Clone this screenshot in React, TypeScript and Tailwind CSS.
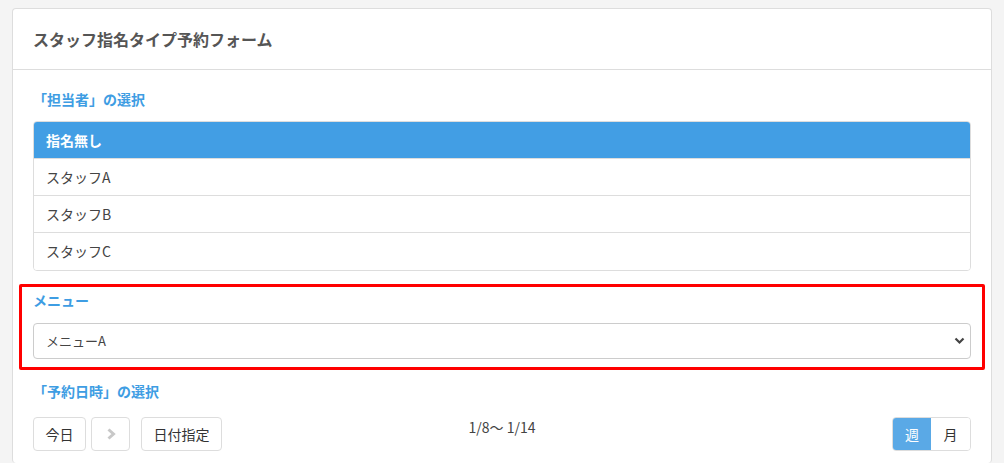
import { useState } from 'react';

const staff = ['指名無し', 'スタッフA', 'スタッフB', 'スタッフC'];

const font = { fontFamily: '"Noto Sans CJK JP", "Noto Sans", sans-serif' };

export default function App() {
  const [selected, setSelected] = useState(0);
  const [mode, setMode] = useState<'week' | 'month'>('week');

  return (
    <div className="min-h-[463px] bg-[#f4f4f4] pt-2 pl-3" style={font}>
      <div className="w-[980px] rounded bg-white border border-[#dddddd] border-b-0">
        <div className="h-[61px] border-b border-[#dddddd] px-5 flex items-center">
          <h1 className="text-[16px] font-bold text-[#555555]">スタッフ指名タイプ予約フォーム</h1>
        </div>

        <div className="px-5 pt-[19px] pb-3">
          <h2 className="text-[14px] leading-5 font-bold text-[#3e9de3]">「担当者」の選択</h2>

          <div className="mt-3 border border-[#dddddd] rounded overflow-hidden">
            {staff.map((name, i) => (
              <button
                key={name}
                onClick={() => setSelected(i)}
                className={`w-full h-[37px] flex items-center px-3 text-left text-[14px] ${
                  i < staff.length - 1 ? 'border-b border-[#dddddd]' : 'h-[36px]'
                } ${selected === i ? 'bg-[#429ee4] text-white font-bold' : 'bg-white text-[#444444]'}`}
              >
                {name}
              </button>
            ))}
          </div>

          <div className="mt-[13px] -mx-[14px] border-[3px] border-[#ff0000] rounded-[2px] px-[11px] pt-[3px] pb-2">
            <h2 className="text-[14px] leading-5 font-bold text-[#3e9de3]">メニュー</h2>
            <div className="relative mt-[13px]">
              <select className="w-full h-9 appearance-none rounded border border-[#cccccc] bg-white px-3 text-[13px] text-[#444444] outline-none">
                <option>メニューA</option>
                <option>メニューB</option>
              </select>
              <svg
                className="absolute right-[6px] top-[13px] pointer-events-none"
                width="11"
                height="9"
                viewBox="0 0 11 9"
              >
                <path d="M1.5 2.5 L5.5 6.5 L9.5 2.5" fill="none" stroke="#444444" strokeWidth="2.2" />
              </svg>
            </div>
          </div>

          <h2 className="mt-[11px] text-[14px] leading-5 font-bold text-[#3e9de3]">「予約日時」の選択</h2>

          <div className="mt-4 grid grid-cols-[1fr_auto_1fr] items-start">
            <div className="flex">
              <button className="h-[34px] w-[53px] rounded border border-[#dddddd] bg-white text-[14px] text-[#333333]">今日</button>
              <button className="ml-[5px] h-[34px] w-[39px] rounded border border-[#dddddd] bg-white flex items-center justify-center">
                <svg width="10" height="12" viewBox="0 0 10 12">
                  <path d="M2.5 1.5 L7.5 6 L2.5 10.5" fill="none" stroke="#c8c8c8" strokeWidth="3" />
                </svg>
              </button>
              <button className="ml-[11px] h-[34px] w-[81px] rounded border border-[#dddddd] bg-white text-[14px] text-[#333333]">日付指定</button>
            </div>
            <div className="text-center text-[14px] text-[#444444]">1/8〜 1/14</div>
            <div className="flex justify-end">
              <div className="flex h-[34px] rounded border border-[#dddddd] overflow-hidden">
                <button
                  onClick={() => setMode('week')}
                  className={`w-[38px] text-[14px] ${mode === 'week' ? 'bg-[#5aa9e6] text-white' : 'bg-white text-[#333333]'}`}
                >
                  週
                </button>
                <button
                  onClick={() => setMode('month')}
                  className={`w-[39px] text-[14px] ${mode === 'month' ? 'bg-[#5aa9e6] text-white' : 'bg-white text-[#333333]'}`}
                >
                  月
                </button>
              </div>
            </div>
          </div>
        </div>
      </div>
    </div>
  );
}
